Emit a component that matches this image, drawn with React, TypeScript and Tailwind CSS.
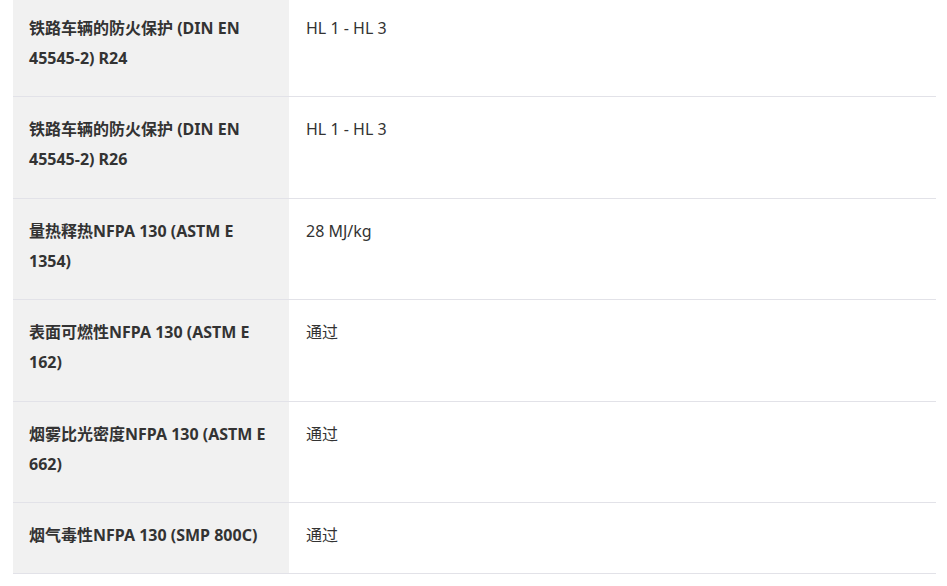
import React from "react";

const rows: [string, string][] = [
  ["铁路车辆的防火保护 (DIN EN 45545-2) R24", "HL 1 - HL 3"],
  ["铁路车辆的防火保护 (DIN EN 45545-2) R26", "HL 1 - HL 3"],
  ["量热释热NFPA 130 (ASTM E 1354)", "28 MJ/kg"],
  ["表面可燃性NFPA 130 (ASTM E 162)", "通过"],
  ["烟雾比光密度NFPA 130 (ASTM E 662)", "通过"],
  ["烟气毒性NFPA 130 (SMP 800C)", "通过"],
];

export default function App() {
  return (
    <div
      className="w-[947px] h-[586px] overflow-hidden bg-white"
      style={{ fontFamily: '"Noto Sans", "Noto Sans CJK SC", sans-serif' }}
    >
      <div className="ml-[13px] w-[923px] mt-[-4.5px] text-[16px] leading-[30.25px] text-[#333333]">
        {rows.map(([k, v], i) => (
          <div key={i} className="grid grid-cols-[276px_1fr] border-b border-[#e2e2e8]">
            <div className="bg-[#f1f1f1] px-4 pt-[17px] pb-[23px] font-bold">{k}</div>
            <div className="px-[17px] pt-[17px] pb-[23px]">{v}</div>
          </div>
        ))}
      </div>
    </div>
  );
}
